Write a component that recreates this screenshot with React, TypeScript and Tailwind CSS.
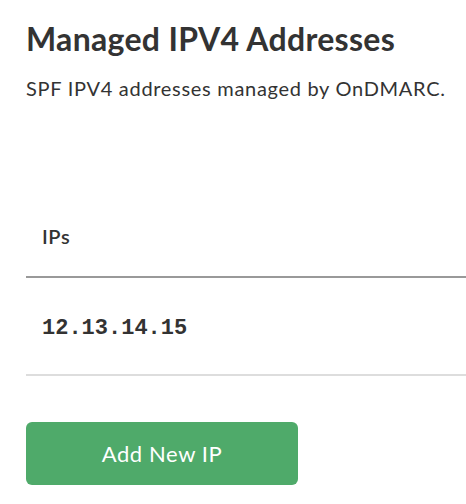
export default function App() {
  return (
    <div className="min-h-[504px] w-[466px] bg-white pl-[26px] font-['Lato','Noto_Sans',sans-serif] text-[#333]">
      <h1 className="pt-[20px] text-[32px] font-bold leading-[38px] tracking-[0.3px] text-[#333]">
        Managed IPV4 Addresses
      </h1>
      <p className="mt-[17px] text-[20px] leading-[26px] tracking-[0.7px] text-[#333]">
        SPF IPV4 addresses managed by OnDMARC.
      </p>

      <table className="mt-[80px] w-[440px] border-collapse">
        <thead>
          <tr className="border-b-2 border-[#999]">
            <th className="h-[96px] px-[16px] pt-[14px] text-left text-[20px] font-semibold tracking-[0.6px]">IPs</th>
          </tr>
        </thead>
        <tbody>
          <tr className="border-b-2 border-[#ddd]">
            <td className="h-[98px] px-[16px] pt-[4px] font-['Liberation_Mono',monospace] text-[22px] font-bold text-[#333]">
              12.13.14.15
            </td>
          </tr>
        </tbody>
      </table>

      <button className="mt-[46px] h-[63px] w-[272px] rounded-[6px] bg-[#4faa6a] text-[22px] tracking-[0.6px] text-white">
        Add New IP
      </button>
    </div>
  );
}
